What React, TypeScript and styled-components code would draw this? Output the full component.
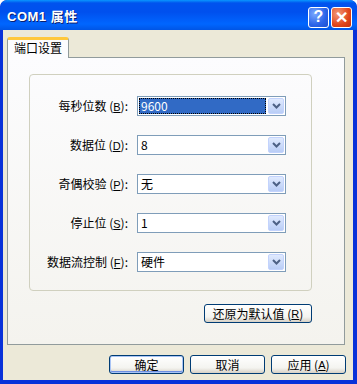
import { Fragment } from "react";
import styled, { createGlobalStyle } from "styled-components";

const Global = createGlobalStyle`
  html, body { margin: 0; padding: 0; background: #ffffff; }
  body { font-family: "Noto Sans CJK SC", "Liberation Sans", sans-serif; }
`;

const Win = styled.div`
  width: 357px;
  height: 384px;
  display: flex;
  flex-direction: column;
  background: #0831d9;
  border-radius: 7px 7px 0 0;
  overflow: hidden;
  box-sizing: border-box;
`;

const TitleBar = styled.div`
  height: 30px;
  flex: none;
  box-sizing: border-box;
  display: flex;
  align-items: center;
  padding: 4px 5px 0 7px;
  background: linear-gradient(
    to bottom,
    #0997ff 0%,
    #0053ee 10%,
    #0050ee 40%,
    #0066ff 80%,
    #0055e5 100%
  );
  border-radius: 7px 7px 0 0;
`;

const Title = styled.div`
  flex: 1;
  margin-top: -4px;
  color: #fff;
  font-family: "Liberation Sans", "Noto Sans CJK SC", sans-serif;
  font-weight: bold;
  font-size: 13px;
  letter-spacing: 0.5px;
  text-shadow: 1px 1px 0 #0a1e6e;
`;

const CapBtn = styled.div<{ $close?: boolean }>`
  width: 19px;
  height: 19px;
  margin-left: 2px;
  border: 1px solid #fff;
  border-radius: 3px;
  display: flex;
  align-items: center;
  justify-content: center;
  color: #fff;
  font-family: "Liberation Sans", sans-serif;
  font-weight: bold;
  font-size: 16px;
  background: ${(p) =>
    p.$close
      ? "radial-gradient(circle at 30% 30%, #f29a7a, #e0461b 60%, #c1300c)"
      : "radial-gradient(circle at 30% 30%, #7aa8ff, #2a63e8 60%, #1b4fd0)"};
`;

const Body = styled.div`
  flex: 1;
  margin: 0 4px 4px 3px;
  background: #ece9d8;
  display: flex;
  flex-direction: column;
  padding: 7px 8px 0 4px;
`;

const TabStrip = styled.div`
  display: flex;
  height: 20px;
`;

const Tab = styled.div`
  width: 62px;
  box-sizing: border-box;
  border: 1px solid #919b9c;
  border-bottom: none;
  border-top: 3px solid #ffc83c;
  border-radius: 3px 3px 0 0;
  background: #fcfcfe;
  font-size: 12px;
  line-height: 16px;
  padding-left: 6px;
  color: #000;
  position: relative;
  z-index: 1;
  height: 21px;
`;

const Panel = styled.div`
  height: 288px;
  box-sizing: border-box;
  border: 1px solid #919b9c;
  background: linear-gradient(to bottom, #fcfcfe, #f4f3ee);
  padding: 16px 32px 0 21px;
  display: flex;
  flex-direction: column;
  align-items: flex-end;
`;

const Group = styled.div`
  align-self: stretch;
  height: 217px;
  box-sizing: border-box;
  border: 1px solid #d0d0bf;
  border-radius: 4px;
  display: grid;
  grid-template-columns: 98px 149px;
  grid-auto-rows: 20px;
  row-gap: 19px;
  column-gap: 9px;
  padding: 21px 0 0 0;
`;

const Label = styled.div`
  font-size: 12px;
  line-height: 20px;
  text-align: right;
  color: #000;
  white-space: nowrap;
`;

const Key = styled.span`
  font-family: "Liberation Sans", sans-serif;
  font-size: 11px;
  text-decoration: underline;
`;

const Combo = styled.div`
  box-sizing: border-box;
  border: 1px solid #7f9db9;
  background: #fff;
  display: flex;
  align-items: stretch;
  padding: 1px;
  height: 20px;
`;

const Value = styled.div<{ $sel?: boolean }>`
  flex: 1;
  font-size: 12px;
  line-height: 14px;
  padding: 1px 2px;
  margin-right: 2px;
  color: ${(p) => (p.$sel ? "#fff" : "#000")};
  background: ${(p) => (p.$sel ? "#316ac5" : "transparent")};
  outline: ${(p) => (p.$sel ? "1px dotted #000" : "none")};
  outline-offset: -1px;
`;

const Drop = styled.div`
  width: 16px;
  flex: none;
  border-radius: 2px;
  background: linear-gradient(to bottom, #e0eafe, #b9cdf6);
  border: 1px solid #c3d3fd;
  box-sizing: border-box;
  display: flex;
  align-items: center;
  justify-content: center;
`;

const Btn = styled.div<{ $def?: boolean; $w?: number }>`
  width: ${(p) => p.$w ?? 75}px;
  height: 19px;
  box-sizing: border-box;
  border: 1px solid #003c74;
  border-radius: 3px;
  background: linear-gradient(to bottom, #ffffff, #f4f4f0 70%, #d6d0c5);
  box-shadow: ${(p) =>
    p.$def ? "inset 0 0 0 1px #a9c4f5, inset 0 -1px 0 1px #6d8ee2" : "none"};
  display: flex;
  align-items: center;
  justify-content: center;
  font-size: 12px;
  color: #000;
`;

const ResetRow = styled.div`
  margin-top: 13px;
`;

const Footer = styled.div`
  display: flex;
  justify-content: flex-end;
  gap: 6px;
  padding-top: 10px;
  margin-right: -1px;
`;

const Arrow = () => (
  <svg width="9" height="6" viewBox="0 0 9 6">
    <path d="M1 1 L4.5 4.5 L8 1" fill="none" stroke="#4d6185" strokeWidth="2" />
  </svg>
);

const rows = [
  { label: "每秒位数", key: "B", value: "9600", sel: true },
  { label: "数据位", key: "D", value: "8" },
  { label: "奇偶校验", key: "P", value: "无" },
  { label: "停止位", key: "S", value: "1" },
  { label: "数据流控制", key: "F", value: "硬件" },
];

export default function App() {
  return (
    <>
      <Global />
      <Win>
        <TitleBar>
          <Title>COM1 属性</Title>
          <CapBtn>?</CapBtn>
          <CapBtn $close>✕</CapBtn>
        </TitleBar>
        <Body>
          <TabStrip>
            <Tab>端口设置</Tab>
          </TabStrip>
          <Panel>
            <Group>
              {rows.map((r) => (
                <Fragment key={r.label}>
                  <Label>
                    {r.label} (<Key>{r.key}</Key>):
                  </Label>
                  <Combo>
                    <Value $sel={r.sel}>{r.value}</Value>
                    <Drop>
                      <Arrow />
                    </Drop>
                  </Combo>
                </Fragment>
              ))}
            </Group>
            <ResetRow>
              <Btn $w={108}>
                还原为默认值 (<Key>R</Key>)
              </Btn>
            </ResetRow>
          </Panel>
          <Footer>
            <Btn $def>确定</Btn>
            <Btn>取消</Btn>
            <Btn>
              应用 (<Key>A</Key>)
            </Btn>
          </Footer>
        </Body>
      </Win>
    </>
  );
}
